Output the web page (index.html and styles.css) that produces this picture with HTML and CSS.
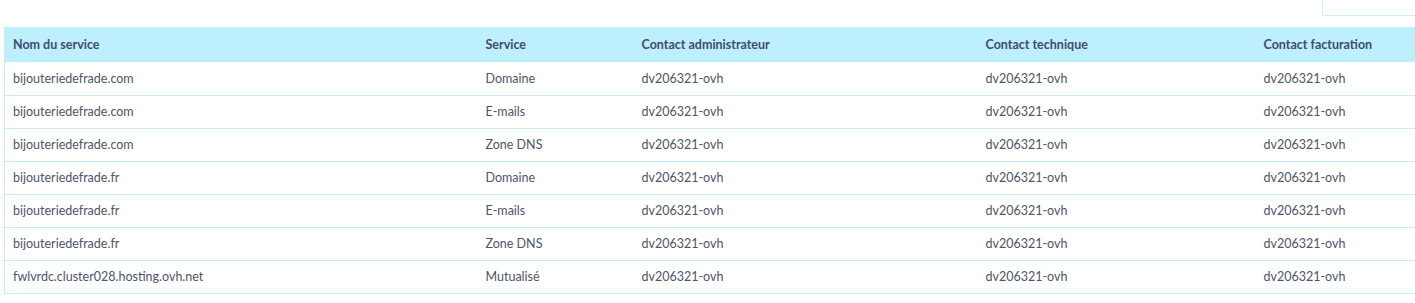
FILE: index.html
```html
<!DOCTYPE html>
<html lang="fr">
<head>
<meta charset="utf-8">
<link rel="stylesheet" href="styles.css">
</head>
<body>
<div class="page">
  <div class="toolbar"><div class="search-box"></div></div>
  <table class="contacts">
    <colgroup>
      <col class="c1"><col class="c2"><col class="c3"><col class="c4"><col class="c5">
    </colgroup>
    <thead>
      <tr>
        <th>Nom du service</th>
        <th>Service</th>
        <th>Contact administrateur</th>
        <th>Contact technique</th>
        <th>Contact facturation</th>
      </tr>
    </thead>
    <tbody>
      <tr><td>bijouteriedefrade.com</td><td>Domaine</td><td>dv206321-ovh</td><td>dv206321-ovh</td><td>dv206321-ovh</td></tr>
      <tr><td>bijouteriedefrade.com</td><td>E-mails</td><td>dv206321-ovh</td><td>dv206321-ovh</td><td>dv206321-ovh</td></tr>
      <tr><td>bijouteriedefrade.com</td><td>Zone DNS</td><td>dv206321-ovh</td><td>dv206321-ovh</td><td>dv206321-ovh</td></tr>
      <tr><td>bijouteriedefrade.fr</td><td>Domaine</td><td>dv206321-ovh</td><td>dv206321-ovh</td><td>dv206321-ovh</td></tr>
      <tr><td>bijouteriedefrade.fr</td><td>E-mails</td><td>dv206321-ovh</td><td>dv206321-ovh</td><td>dv206321-ovh</td></tr>
      <tr><td>bijouteriedefrade.fr</td><td>Zone DNS</td><td>dv206321-ovh</td><td>dv206321-ovh</td><td>dv206321-ovh</td></tr>
      <tr><td>fwlvrdc.cluster028.hosting.ovh.net</td><td>Mutualisé</td><td>dv206321-ovh</td><td>dv206321-ovh</td><td>dv206321-ovh</td></tr>
    </tbody>
  </table>
</div>
</body>
</html>
```
FILE: styles.css
```css
html, body {
  margin: 0;
  padding: 0;
  background: #ffffff;
}
.page {
  padding: 0 0 0 4px;
  font-family: "Lato", "Open Sans", sans-serif;
}
.toolbar {
  display: flex;
  justify-content: flex-end;
  height: 27px;
}
.search-box {
  width: 93px;
  height: 16px;
  box-sizing: border-box;
  border: 1px solid #d3ecf7;
  border-top: none;
  border-right: none;
}
.contacts {
  width: 1411px;
  border-collapse: collapse;
  table-layout: fixed;
  border-left: 1px solid #cce9f5;
}
.c1 { width: 473px; }
.c2 { width: 156px; }
.c3 { width: 344px; }
.c4 { width: 278px; }
.c5 { width: 160px; }
.contacts th {
  background: #bdeffd;
  color: #3f4d6d;
  font-weight: 700;
  font-size: 12.5px;
  text-align: left;
  height: 35px;
  padding: 0 8px;
  box-sizing: border-box;
}
.contacts td {
  color: #4e5566;
  font-size: 12.5px;
  height: 33px;
  padding: 0 8px;
  box-sizing: border-box;
  border-bottom: 1px solid #cce9f5;
  white-space: nowrap;
}
```
